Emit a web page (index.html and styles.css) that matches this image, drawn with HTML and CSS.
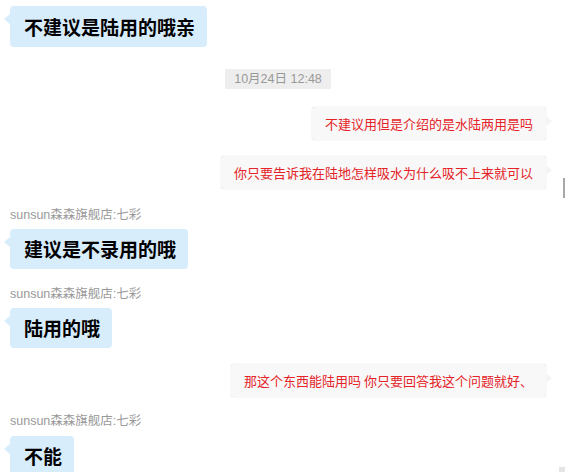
FILE: index.html
```html
<!DOCTYPE html>
<html lang="zh-CN">
<head>
<meta charset="utf-8">
<link rel="stylesheet" href="styles.css">
</head>
<body>
<div class="chat">
  <div class="bubble-l first">不建议是陆用的哦亲</div>
  <div class="time">10月24日 12:48</div>
  <div class="bubble-r t18">不建议用但是介绍的是水陆两用是吗</div>
  <div class="bubble-r t16">你只要告诉我在陆地怎样吸水为什么吸不上来就可以</div>
  <div class="name t19">sunsun森森旗舰店:七彩</div>
  <div class="bubble-l t7">建议是不录用的哦</div>
  <div class="name t18">sunsun森森旗舰店:七彩</div>
  <div class="bubble-l t7">陆用的哦</div>
  <div class="bubble-r t16">那这个东西能陆用吗 你只要回答我这个问题就好、</div>
  <div class="name t17">sunsun森森旗舰店:七彩</div>
  <div class="bubble-l t8">不能</div>
</div>
<div class="scroll-thumb"></div>
<div class="corner"></div>
</body>
</html>
```

FILE: styles.css
```css
html, body {
  margin: 0;
  padding: 0;
  background: #ffffff;
  height: 472px;
  overflow: hidden;
}
body {
  font-family: "Noto Sans CJK SC", "Noto Sans", sans-serif;
  position: relative;
}
.chat {
  display: flex;
  flex-direction: column;
  padding: 6px 19px 0 10px;
}
.bubble-l {
  align-self: flex-start;
  position: relative;
  background: #d8edfc;
  color: #000;
  font-weight: 700;
  font-size: 19px;
  line-height: 24px;
  padding: 8px 12px 8px 14px;
  border-radius: 4px;
}
.bubble-l.first {
  padding-top: 9px;
}
.bubble-l::before {
  content: "";
  position: absolute;
  left: -6px;
  top: 8px;
  border-right: 6px solid #d8edfc;
  border-top: 5px solid transparent;
  border-bottom: 5px solid transparent;
}
.bubble-r {
  align-self: flex-end;
  position: relative;
  background: #f8f8f8;
  box-shadow: 0 0 1px rgba(0,0,0,0.25);
  color: #e42429;
  font-size: 13px;
  line-height: 17px;
  padding: 8px 13px;
  border-radius: 3px;
}
.bubble-r::after {
  content: "";
  position: absolute;
  right: -6px;
  top: 9px;
  border-left: 6px solid #f4f4f4;
  border-top: 5px solid transparent;
  border-bottom: 5px solid transparent;
}
.time {
  align-self: center;
  margin-top: 22px;
  background: #eeeeee;
  color: #999;
  font-family: "Liberation Sans", "Noto Sans CJK SC", sans-serif;
  font-size: 12.5px;
  line-height: 20px;
  padding: 0 9px;
}
.name {
  color: #999;
  font-family: "Liberation Sans", "Noto Sans CJK SC", sans-serif;
  font-size: 12.5px;
  line-height: 14px;
}
.t7 { margin-top: 7px; }
.t8 { margin-top: 8px; }
.t16 { margin-top: 16px; }
.t17 { margin-top: 17px; }
.t18 { margin-top: 18px; }
.t19 { margin-top: 19px; }
.scroll-thumb {
  position: absolute;
  left: 563px;
  top: 178px;
  width: 2px;
  height: 20px;
  background: #a8a8a8;
}
.corner {
  position: absolute;
  left: 559px;
  top: 467px;
  width: 6px;
  height: 5px;
  background: #e4e4e4;
}
```
